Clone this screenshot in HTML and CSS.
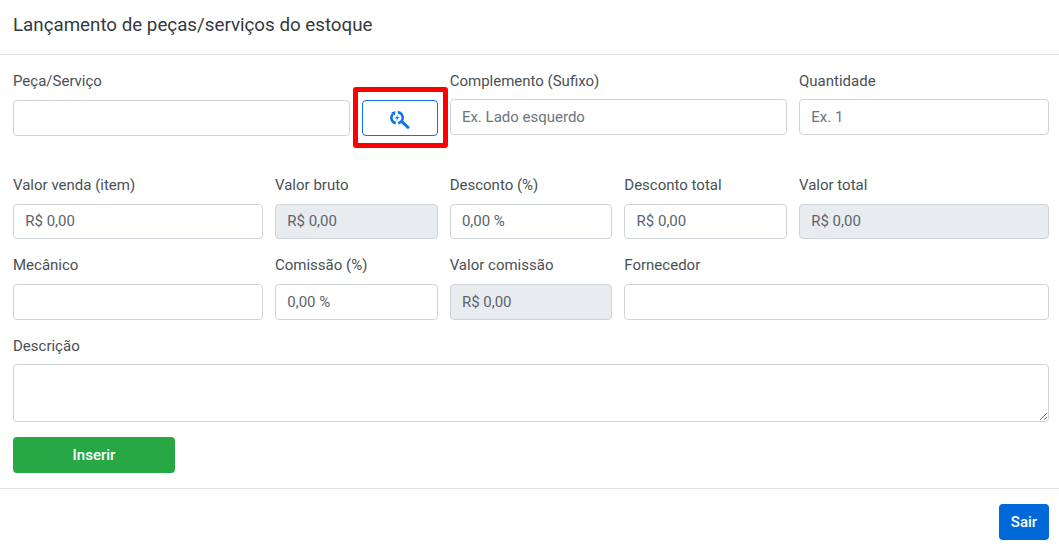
FILE: index.html
```html
<!DOCTYPE html>
<html lang="pt-BR">
<head>
    <meta charset="UTF-8">
    <title>Lançamento de peças/serviços do estoque</title>
    <link rel="stylesheet" href="styles.css">
</head>
<body>

<div class="modal">
    <div class="modal-header">
        <h5>Lançamento de peças/serviços do estoque</h5>
    </div>

    <div class="modal-body">
        <div class="row row-first">
            <div class="col col-4">
                <label>Peça/Serviço</label>
                <input type="text" class="field">
            </div>
            <div class="col col-1 col-search">
                <button class="btn-search">
                    <svg class="icon-search" width="20" height="20" viewBox="0 0 20 20" fill="none">
                        <path d="M7.8 3.16A5.6 5.6 0 0 1 8.2 14.2" stroke="#0b72e7" stroke-width="2.6"/>
                        <path d="M5.8 14.2A5.6 5.6 0 0 1 3 4.8" stroke="#0b72e7" stroke-width="2.6"/>
                        <path d="M1.2 3.2L5.6 2.2L4.8 6.6Z" fill="#0b72e7"/>
                        <path d="M8.8 4.8L5 9.6H7L5.4 12.8L9.4 8H7.2Z" fill="#0b72e7"/>
                        <path d="M12.6 13.4L18 18.4" stroke="#0b72e7" stroke-width="2.8" stroke-linecap="round"/>
                    </svg>
                </button>
                <span class="highlight"></span>
            </div>
            <div class="col col-4 col-tight">
                <label>Complemento (Sufixo)</label>
                <input type="text" class="field" placeholder="Ex. Lado esquerdo">
            </div>
            <div class="col col-3 col-tight">
                <label>Quantidade</label>
                <input type="text" class="field" placeholder="Ex. 1">
            </div>
        </div>

        <div class="row">
            <div class="col col-3">
                <label>Valor venda (item)</label>
                <input type="text" class="field" value="R$ 0,00">
            </div>
            <div class="col col-2">
                <label>Valor bruto</label>
                <input type="text" class="field" value="R$ 0,00" disabled>
            </div>
            <div class="col col-2">
                <label>Desconto (%)</label>
                <input type="text" class="field" value="0,00 %">
            </div>
            <div class="col col-2">
                <label>Desconto total</label>
                <input type="text" class="field" value="R$ 0,00">
            </div>
            <div class="col col-3">
                <label>Valor total</label>
                <input type="text" class="field" value="R$ 0,00" disabled>
            </div>
        </div>

        <div class="row">
            <div class="col col-3">
                <label>Mecânico</label>
                <input type="text" class="field">
            </div>
            <div class="col col-2">
                <label>Comissão (%)</label>
                <input type="text" class="field" value="0,00 %">
            </div>
            <div class="col col-2">
                <label>Valor comissão</label>
                <input type="text" class="field" value="R$ 0,00" disabled>
            </div>
            <div class="col col-5">
                <label>Fornecedor</label>
                <input type="text" class="field">
            </div>
        </div>

        <div class="row">
            <div class="col col-12 col-tight">
                <label>Descrição</label>
                <textarea class="field field-area"></textarea>
            </div>
        </div>

        <button class="btn btn-insert">Inserir</button>
    </div>

    <div class="modal-footer">
        <button class="btn btn-exit">Sair</button>
    </div>
</div>

</body>
</html>
```

FILE: styles.css
```css
* {
    box-sizing: border-box;
}
body {
    margin: 0;
    background-color: #fff;
    font-family: Roboto, "Liberation Sans", sans-serif;
    font-size: 15px;
    line-height: 22.5px;
    color: #495057;
}
.modal-header {
    height: 55px;
    padding: 11px 13px 0;
    border-bottom: 1px solid #dee2e6;
}
.modal-header h5 {
    margin: 0;
    font-size: 18.75px;
    font-weight: 400;
    line-height: 28px;
    color: #343a40;
}
.modal-body {
    padding: 15px 10px 0 13px;
}
.row {
    display: flex;
    margin: 0 -6px 15px;
}
.row-first {
    margin-bottom: 37.5px;
}
.col {
    padding: 0 6px;
}
.col-1 { width: 8.3333%; }
.col-2 { width: 16.6667%; }
.col-3 { width: 25%; }
.col-4 { width: 33.3333%; }
.col-5 { width: 41.6667%; }
.col-12 { width: 100%; }
.col-tight label {
    margin-bottom: 6.5px;
}
.col-search {
    position: relative;
    padding-top: 30px;
}
label {
    display: block;
    margin-bottom: 7.5px;
    color: #495057;
}
.field {
    display: block;
    width: 100%;
    height: 35.75px;
    padding: 5.6px 11.25px;
    border: 1px solid #ced4da;
    border-radius: 4px;
    background-color: #fff;
    font-family: inherit;
    font-size: 15px;
    color: #5b646c;
}
.field::placeholder {
    color: #6c757d;
}
.field:disabled {
    background-color: #e9ecef;
}
.field-area {
    height: 58px;
}
.btn-search {
    display: flex;
    align-items: center;
    justify-content: center;
    width: 100%;
    height: 36px;
    padding: 0;
    border: 1px solid #0b72e7;
    border-radius: 4px;
    background-color: #fff;
}
.icon-search {
    margin-top: 2px;
}
.highlight {
    position: absolute;
    top: 17px;
    left: -3px;
    width: 95px;
    height: 61px;
    border: 5px solid #f00;
    border-radius: 3px;
}
.btn {
    height: 36px;
    border: none;
    border-radius: 4px;
    color: #fff;
    font-family: inherit;
    font-size: 15px;
    font-weight: 500;
}
.btn-insert {
    display: block;
    width: 162px;
    background-color: #28a745;
}
.modal-footer {
    display: flex;
    justify-content: flex-end;
    margin-top: 15px;
    padding: 15px 10px 0;
    border-top: 1px solid #dee2e6;
}
.btn-exit {
    width: 50px;
    background-color: #0069d9;
}
```
